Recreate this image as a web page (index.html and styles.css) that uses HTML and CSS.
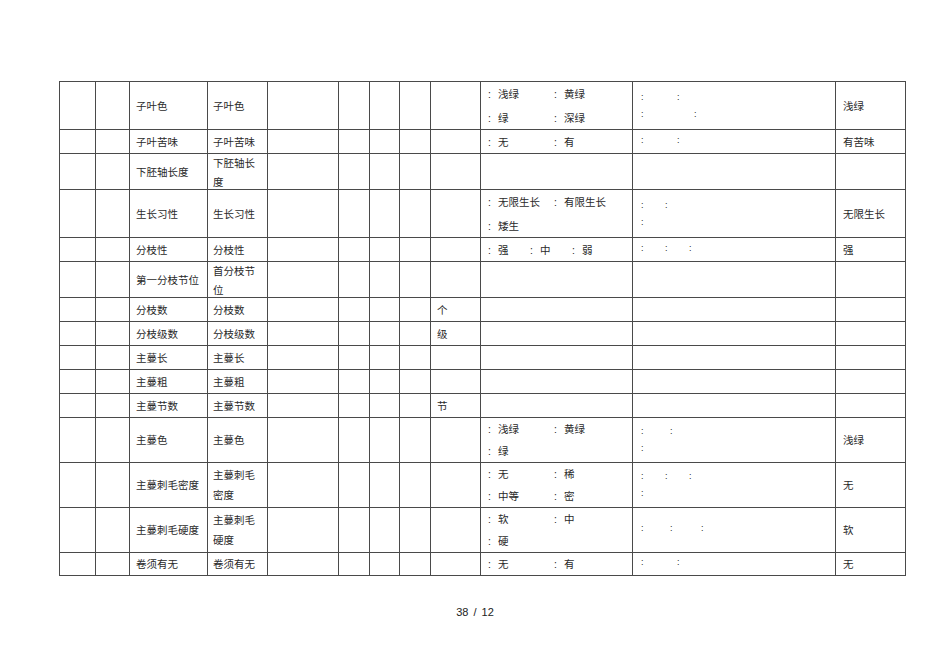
FILE: index.html
```html
<!DOCTYPE html>
<html lang="zh">
<head>
<meta charset="utf-8">
<title>性状表</title>
<link rel="stylesheet" href="styles.css">
</head>
<body>
<div class="page">
<table class="sheet">
  <colgroup>
    <col class="c1"><col class="c2"><col class="c3"><col class="c4"><col class="c5"><col class="c6"><col class="c7"><col class="c8"><col class="c9"><col class="c10"><col class="c11"><col class="c12">
  </colgroup>
  <tbody>
    <tr class="h48">
      <td></td><td></td><td class="nm">子叶色</td><td class="nm2">子叶色</td><td></td><td></td><td></td><td></td><td class="un"></td>
      <td class="op"><div class="stack"><div class="ln"><span class="o w66"><i>:</i>浅绿</span><span class="o"><i>:</i>黄绿</span></div><div class="ln"><span class="o w66"><i>:</i>绿</span><span class="o"><i>:</i>深绿</span></div></div></td>
      <td class="cl"><div class="stack"><div class="cln"><span class="k w35">:</span><span class="k">:</span></div><div class="cln"><span class="k w53">:</span><span class="k">:</span></div></div></td>
      <td class="rs">浅绿</td>
    </tr>
    <tr class="h24">
      <td></td><td></td><td class="nm">子叶苦味</td><td class="nm2">子叶苦味</td><td></td><td></td><td></td><td></td><td class="un"></td>
      <td class="op"><div class="stack"><div class="ln"><span class="o w66"><i>:</i>无</span><span class="o"><i>:</i>有</span></div></div></td>
      <td class="cl"><div class="stack"><div class="cln"><span class="k w35">:</span><span class="k">:</span></div></div></td>
      <td class="rs">有苦味</td>
    </tr>
    <tr class="h36">
      <td></td><td></td><td class="nm">下胚轴长度</td><td class="nm2"><div class="two">下胚轴长度</div></td><td></td><td></td><td></td><td></td><td class="un"></td>
      <td class="op"></td><td class="cl"></td><td class="rs"></td>
    </tr>
    <tr class="h48">
      <td></td><td></td><td class="nm">生长习性</td><td class="nm2">生长习性</td><td></td><td></td><td></td><td></td><td class="un"></td>
      <td class="op"><div class="stack"><div class="ln"><span class="o w66"><i>:</i>无限生长</span><span class="o"><i>:</i>有限生长</span></div><div class="ln"><span class="o w66"><i>:</i>矮生</span></div></div></td>
      <td class="cl"><div class="stack"><div class="cln"><span class="k w23">:</span><span class="k">:</span></div><div class="cln"><span class="k">:</span></div></div></td>
      <td class="rs">无限生长</td>
    </tr>
    <tr class="h24">
      <td></td><td></td><td class="nm">分枝性</td><td class="nm2">分枝性</td><td></td><td></td><td></td><td></td><td class="un"></td>
      <td class="op"><div class="stack"><div class="ln"><span class="o w42"><i>:</i>强</span><span class="o w42"><i>:</i>中</span><span class="o"><i>:</i>弱</span></div></div></td>
      <td class="cl"><div class="stack"><div class="cln"><span class="k w23">:</span><span class="k w24">:</span><span class="k">:</span></div></div></td>
      <td class="rs">强</td>
    </tr>
    <tr class="h36">
      <td></td><td></td><td class="nm">第一分枝节位</td><td class="nm2"><div class="two">首分枝节位</div></td><td></td><td></td><td></td><td></td><td class="un"></td>
      <td class="op"></td><td class="cl"></td><td class="rs"></td>
    </tr>
    <tr class="h24">
      <td></td><td></td><td class="nm">分枝数</td><td class="nm2">分枝数</td><td></td><td></td><td></td><td></td><td class="un">个</td>
      <td class="op"></td><td class="cl"></td><td class="rs"></td>
    </tr>
    <tr class="h24">
      <td></td><td></td><td class="nm">分枝级数</td><td class="nm2">分枝级数</td><td></td><td></td><td></td><td></td><td class="un">级</td>
      <td class="op"></td><td class="cl"></td><td class="rs"></td>
    </tr>
    <tr class="h24">
      <td></td><td></td><td class="nm">主蔓长</td><td class="nm2">主蔓长</td><td></td><td></td><td></td><td></td><td class="un"></td>
      <td class="op"></td><td class="cl"></td><td class="rs"></td>
    </tr>
    <tr class="h24">
      <td></td><td></td><td class="nm">主蔓粗</td><td class="nm2">主蔓粗</td><td></td><td></td><td></td><td></td><td class="un"></td>
      <td class="op"></td><td class="cl"></td><td class="rs"></td>
    </tr>
    <tr class="h24">
      <td></td><td></td><td class="nm">主蔓节数</td><td class="nm2">主蔓节数</td><td></td><td></td><td></td><td></td><td class="un">节</td>
      <td class="op"></td><td class="cl"></td><td class="rs"></td>
    </tr>
    <tr class="h45">
      <td></td><td></td><td class="nm">主蔓色</td><td class="nm2">主蔓色</td><td></td><td></td><td></td><td></td><td class="un"></td>
      <td class="op"><div class="stack"><div class="ln l22"><span class="o w66"><i>:</i>浅绿</span><span class="o"><i>:</i>黄绿</span></div><div class="ln l22"><span class="o w66"><i>:</i>绿</span></div></div></td>
      <td class="cl"><div class="stack"><div class="cln"><span class="k w28">:</span><span class="k">:</span></div><div class="cln"><span class="k">:</span></div></div></td>
      <td class="rs">浅绿</td>
    </tr>
    <tr class="h45">
      <td></td><td></td><td class="nm">主蔓刺毛密度</td><td class="nm2"><div class="two t20">主蔓刺毛密度</div></td><td></td><td></td><td></td><td></td><td class="un"></td>
      <td class="op"><div class="stack"><div class="ln l22"><span class="o w66"><i>:</i>无</span><span class="o"><i>:</i>稀</span></div><div class="ln l22"><span class="o w66"><i>:</i>中等</span><span class="o"><i>:</i>密</span></div></div></td>
      <td class="cl"><div class="stack"><div class="cln"><span class="k w23">:</span><span class="k w24">:</span><span class="k">:</span></div><div class="cln"><span class="k">:</span></div></div></td>
      <td class="rs">无</td>
    </tr>
    <tr class="h45">
      <td></td><td></td><td class="nm">主蔓刺毛硬度</td><td class="nm2"><div class="two t20">主蔓刺毛硬度</div></td><td></td><td></td><td></td><td></td><td class="un"></td>
      <td class="op"><div class="stack"><div class="ln l22"><span class="o w66"><i>:</i>软</span><span class="o"><i>:</i>中</span></div><div class="ln l22"><span class="o w66"><i>:</i>硬</span></div></div></td>
      <td class="cl"><div class="stack"><div class="cln"><span class="k w28">:</span><span class="k w31">:</span><span class="k">:</span></div></div></td>
      <td class="rs">软</td>
    </tr>
    <tr class="h23">
      <td></td><td></td><td class="nm">卷须有无</td><td class="nm2">卷须有无</td><td></td><td></td><td></td><td></td><td class="un"></td>
      <td class="op"><div class="stack"><div class="ln"><span class="o w66"><i>:</i>无</span><span class="o"><i>:</i>有</span></div></div></td>
      <td class="cl"><div class="stack"><div class="cln"><span class="k w35">:</span><span class="k">:</span></div></div></td>
      <td class="rs">无</td>
    </tr>
  </tbody>
</table>
<div class="pnum">38 / 12</div>
</div>
</body>
</html>
```

FILE: styles.css
```css
html, body {
  margin: 0;
  padding: 0;
  background: #fff;
}
.page {
  width: 950px;
  padding-top: 81px;
}
.sheet {
  margin-left: 59px;
  width: 847px;
  table-layout: fixed;
  border-collapse: collapse;
  font-family: "Noto Sans CJK SC", "Noto Sans", sans-serif;
  font-size: 10.5px;
  color: #2a2a2a;
}
.sheet td {
  border: 1px solid #4a4a4a;
  padding: 0;
  vertical-align: middle;
  line-height: 16px;
}
.c1 { width: 36px; }
.c2 { width: 34px; }
.c3 { width: 78px; }
.c4 { width: 60px; }
.c5 { width: 71px; }
.c6 { width: 31px; }
.c7 { width: 30px; }
.c8 { width: 31px; }
.c9 { width: 50px; }
.c10 { width: 152px; }
.c11 { width: 203px; }
.c12 { width: 70px; }

.h48 { height: 48px; }
.h45 { height: 45px; }
.h36 { height: 36px; }
.h24 { height: 24px; }
.h23 { height: 23px; }

.sheet td.nm { padding-left: 6px; }
.sheet td.nm2 { padding-left: 5px; padding-right: 8px; }
.sheet td.un { padding-left: 6px; }
.sheet td.op { padding-left: 7px; }
.sheet td.cl { padding-left: 8px; }
.sheet td.rs { padding-left: 7px; }

.two {
  line-height: 19px;
  margin: -8px 0;
}
.two.t20 { line-height: 20px; }

.stack {
  margin: -10px 0;
}

.ln {
  line-height: 23px;
  white-space: nowrap;
}
.ln.l22 { line-height: 21px; }
.o {
  display: inline-block;
}
.o i {
  font-style: normal;
  font-family: "Liberation Sans", sans-serif;
  display: inline-block;
  width: 10px;
}
.w66 { width: 66px; }
.w42 { width: 42px; }

.cln {
  line-height: 17px;
  white-space: nowrap;
  font-family: "Liberation Sans", sans-serif;
  font-size: 9px;
}
.k { display: inline-block; }
.w35 { width: 36px; }
.w53 { width: 53px; }
.w23 { width: 24px; }
.w24 { width: 24px; }
.w28 { width: 29px; }
.w31 { width: 31px; }

.pnum {
  margin-top: 30px;
  text-align: center;
  font-family: "Liberation Sans", Arial, sans-serif;
  font-size: 11px;
  color: #222;
  word-spacing: 2px;
}
```
